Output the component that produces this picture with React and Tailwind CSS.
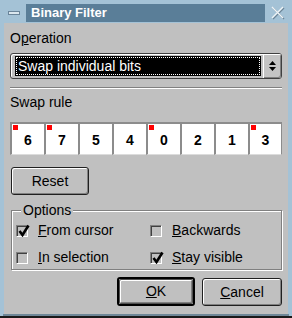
import React from 'react'

const BITS = [
  { v: '6', mark: true },
  { v: '7', mark: true },
  { v: '5' },
  { v: '4' },
  { v: '0', mark: true },
  { v: '2' },
  { v: '1' },
  { v: '3', mark: true },
]

function Check({ checked }) {
  return (
    <div className="relative w-[12px] h-[12px] shrink-0 border-t border-l border-[#808080] border-b border-r border-b-white border-r-white shadow-[inset_1px_1px_0_#404040] bg-[#c0c0c0]">
      {checked && (
        <svg className="absolute left-[1px] top-[-2px]" width="12" height="13" viewBox="0 0 12 13">
          <path d="M1.5 7 L4.5 11 L10.5 1.5" fill="none" stroke="#000" strokeWidth="2.6" />
        </svg>
      )}
    </div>
  )
}

function Option({ checked, hot, rest }) {
  return (
    <label className="flex items-center h-[17px]">
      <Check checked={checked} />
      <span className="ml-[10px] text-[14px] leading-[17px]">
        <span className="underline">{hot}</span>{rest}
      </span>
    </label>
  )
}

export default function App() {
  return (
    <div className="w-[292px] h-[318px] bg-[#a4c2d6] flex flex-col text-black font-['Liberation_Sans',Arial,sans-serif]">
      {/* title bar */}
      <div className="h-[18px] mt-[4px] mx-[4px] flex shrink-0">
        <div className="w-[22px] flex items-center pl-[4px]">
          <div className="w-[12px] h-[4px] bg-[#dbe7ef] border border-[#6a8499]" />
        </div>
        <div className="flex-1 bg-[#5a7e98] text-white font-bold text-[13px] leading-[18px] pl-[5px]">
          Binary Filter
        </div>
        <div className="w-[23px] flex items-center justify-center">
          <svg width="14" height="14" viewBox="0 0 14 14" className="ml-[2px]">
            <path d="M2 2 L13 13 M13 2 L2 13" stroke="#6c8597" strokeWidth="1.4" />
            <path d="M1 1 L12 12 M12 1 L1 12" stroke="#eef3f6" strokeWidth="1.4" />
          </svg>
        </div>
      </div>

      {/* body */}
      <div className="flex-1 mt-[1px] mx-[4px] bg-[#c0c0c0] px-[6px] pt-[7px] flex flex-col">
        <div className="text-[14px] leading-[17px]">
          O<span className="underline">p</span>eration
        </div>

        <div className="mt-[6px] h-[26px] rounded-[3px] border border-[#404040] flex items-center pl-[4px] shadow-[inset_1px_1px_0_#fff]">
          <div className="w-[246px] h-[20px] bg-black p-[1px]">
            <div className="h-full border border-dotted border-white text-white text-[14px] leading-[16px] pl-[1px] whitespace-nowrap">
              Swap individual bits
            </div>
          </div>
          <div className="ml-[2px] w-[18px] h-full rounded-r-[2px] bg-[#c4c4c4] shadow-[inset_1px_1px_0_#fff,inset_-1px_-1px_0_#808080] flex items-center justify-center">
            <svg width="7" height="10" viewBox="0 0 7 10">
              <path d="M3.5 0 L7 4 L0 4 Z M0 6 L7 6 L3.5 10 Z" fill="#000" />
            </svg>
          </div>
        </div>

        <div className="mt-[8px] h-[2px] border-t border-[#808080] border-b border-b-white" />

        <div className="mt-[5px] text-[14px] leading-[17px]">Swap rule</div>

        <div className="mt-[11px] grid grid-cols-8 w-[272px] h-[33px]">
          {BITS.map((b, i) => (
            <div
              key={i}
              className={`relative bg-white border-t-2 border-l-2 border-[#8c8c8c] border-b border-b-[#dcdcdc] flex items-center justify-center font-bold text-[14px] ${i === 7 ? 'border-r border-r-[#8c8c8c]' : ''}`}
            >
              {b.mark && <span className="absolute left-[1px] top-[1px] w-[5px] h-[5px] bg-[#ff0000]" />}
              <span className="mt-[2px]">{b.v}</span>
            </div>
          ))}
        </div>

        <button className="mt-[12px] ml-[1px] w-[78px] h-[28px] rounded-[3px] border border-[#202020] bg-[#c0c0c0] shadow-[inset_1px_1px_0_#fff,inset_-1px_-1px_0_#808080] text-[14px] leading-[17px]">
          Reset
        </button>

        <fieldset className="mt-[7px] ml-[1px] w-[271px] border border-[#808080] shadow-[inset_1px_1px_0_#fff,1px_1px_0_#fff] px-0">
          <legend className="ml-[9px] px-[2px] bg-[#c0c0c0] text-[14px] leading-[17px]">Options</legend>
          <div className="grid grid-cols-[134px_1fr] gap-y-[10px] pl-[4px] pt-[3px] pb-[3px]">
            <Option checked hot="F" rest="rom cursor" />
            <Option hot="B" rest="ackwards" />
            <Option hot="I" rest="n selection" />
            <Option checked hot="S" rest="tay visible" />
          </div>
        </fieldset>

        <div className="mt-[7px] flex justify-end gap-[7px]">
          <div className="w-[78px] h-[29px] rounded-[3px] border-2 border-black">
            <button className="w-full h-full rounded-[2px] border border-[#505050] bg-[#c0c0c0] shadow-[inset_1px_1px_0_#fff,inset_-1px_-1px_0_#808080] text-[14px] leading-[17px]">
              <span className="underline">O</span>K
            </button>
          </div>
          <button className="mt-[1px] w-[80px] h-[28px] rounded-[3px] border border-[#202020] bg-[#c0c0c0] shadow-[inset_1px_1px_0_#fff,inset_-1px_-1px_0_#808080] text-[14px] leading-[17px]">
            <span className="underline">C</span>ancel
          </button>
        </div>
      </div>

      <div className="h-[2px] mx-[3px] bg-[#6f8797] shrink-0" />
      <div className="h-[2px] bg-[#1a1a1a] shrink-0" />
    </div>
  )
}
